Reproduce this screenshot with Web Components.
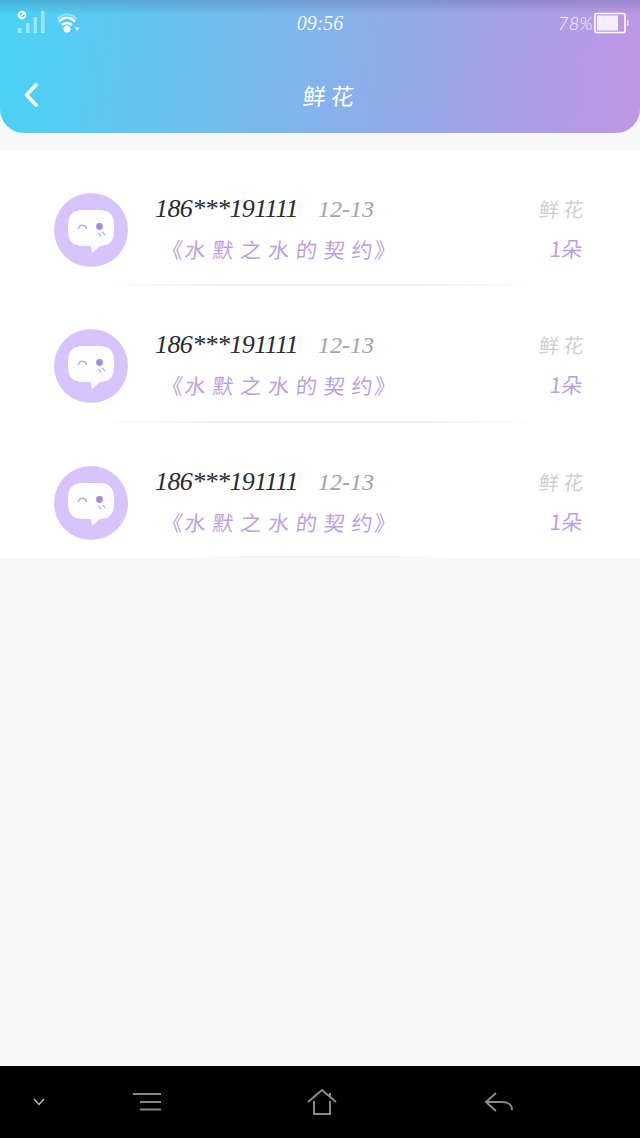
<!DOCTYPE html>
<html lang="zh"><head><meta charset="utf-8"><style>
html,body{margin:0;height:100%}
body{width:640px;height:1138px;background:#f8f8f8;display:flex;flex-direction:column;overflow:hidden;font-family:"Noto Sans CJK SC","Noto Sans",sans-serif}
main-list{margin-top:17px}
nav-bar{margin-top:auto}
</style></head><body>
<app-header title-text="鲜 花"></app-header>
<main-list>
<gift-row></gift-row><gift-row></gift-row><gift-row last></gift-row>
</main-list>
<nav-bar></nav-bar>
<script>
class AppHeader extends HTMLElement{constructor(){super();this.attachShadow({mode:'open'}).innerHTML=`<style>
:host{display:flex;flex-direction:column;height:133px;border-radius:0 0 24px 24px;overflow:hidden;color:#fff;background:linear-gradient(180deg,rgba(70,80,130,.28) 0,rgba(70,80,130,0) 14px),linear-gradient(97deg,#48d3f6 0%,#6cc0ef 30%,#8fade9 60%,#ab9ee7 82%,#c097e4 100%)}
.status{height:45px;display:grid;grid-template-columns:1fr auto 1fr;align-items:center;padding:0 11px 0 17px}
.left{display:flex;align-items:flex-start;gap:11px;align-self:start;margin-top:10px}
.time{font:italic 400 20px/24px "Liberation Serif",serif;opacity:.92;margin-right:6px}
.right{justify-self:end;display:flex;align-items:center;gap:1px}
.pct{font:300 italic 18px/24px Lato,sans-serif;letter-spacing:.4px;opacity:.95}
.bar{flex:1;display:grid;grid-template-columns:1fr auto 1fr;align-items:center;padding:12px 0 0 23px}
.t{font:400 23px/30px "Noto Sans CJK SC",sans-serif;white-space:pre;margin-right:6px;transform:skewX(-6deg)}
svg{display:block}
</style>
<div class="status">
<div class="left">
<svg width="29" height="24" viewBox="0 0 29 24"><g fill="#fff" fill-opacity=".45"><rect x="1" y="18" width="3.5" height="5"/><rect x="9" y="13" width="3.5" height="10"/><rect x="16.500" y="7" width="3.500" height="16"/><rect x="24" y="1" width="3.500" height="22"/></g><circle cx="5" cy="5" r="3.400" fill="none" stroke="#fff" stroke-width="1.800"/><path d="M2.800 7.200 7.200 2.800" stroke="#fff" stroke-width="1.600"/></svg>
<svg width="24" height="22" viewBox="0 0 24 22" style="margin-top:2px"><path d="M0.500 7C5 1 15 1 19.500 7" fill="none" stroke="#fff" stroke-opacity=".4" stroke-width="2"/><path d="M2 9.500C7 4.500 13 4.500 18 9.500" fill="none" stroke="#fff" stroke-width="2.500"/><path d="M5 13C8 10.500 12 10.500 15 13" fill="none" stroke="#fff" stroke-width="2.500"/><circle cx="10" cy="17" r="3.500" fill="#fff"/><path d="M17.500 15.500H22.500L20 18.500Z" fill="#fff"/></svg>
</div>
<div class="time">09:56</div>
<div class="right"><span class="pct">78%</span><svg width="35" height="22" viewBox="0 0 35 22"><rect x="1" y="1.500" width="30" height="19" rx="1.500" fill="none" stroke="#fff" stroke-width="1.600"/><rect x="3" y="3.500" width="21" height="15" fill="#f3eff9"/><rect x="33" y="8" width="1.500" height="6" fill="#fff" fill-opacity=".7"/></svg></div>
</div>
<div class="bar">
<svg width="18" height="24" viewBox="0 0 18 24"><path d="M13 2 3.500 12 13 22" fill="none" stroke="#fff" stroke-width="3.600" stroke-linecap="round" stroke-linejoin="round"/></svg>
<div class="t"></div><span></span></div>`;
this.shadowRoot.querySelector('.t').textContent=this.getAttribute('title-text')}}
customElements.define('app-header',AppHeader);

class MainList extends HTMLElement{constructor(){super();this.attachShadow({mode:'open'}).innerHTML=`<style>:host{display:block;background:#fff;height:408px}</style><slot></slot>`}}
customElements.define('main-list',MainList);

class ChatAvatar extends HTMLElement{constructor(){super();this.attachShadow({mode:'open'}).innerHTML=`<style>:host{display:block;width:74px;height:74px}svg{display:block}</style>
<svg width="74" height="74" viewBox="0 0 74 74"><circle cx="37" cy="37" r="37" fill="#d9c3fb"/>
<path d="M29 17H45C55 17 60 22 60 32V38C60 48 55 53 46 53L38 60 37 53H29C19 53 14 48 14 38V32C14 22 19 17 29 17Z" fill="#fff" fill-opacity=".97"/>
<path d="M24.500 35.500C25.500 31 31.500 31 32.500 35.500" fill="none" stroke="#bfaae2" stroke-width="1.500" stroke-linecap="round"/>
<circle cx="45.500" cy="33.500" r="3.400" fill="#a98ada"/>
<path d="M44.500 40 47 43M48.500 39 51 42" stroke="#b8a4de" stroke-width="1.100" stroke-linecap="round"/>
</svg>`}}
customElements.define('chat-avatar',ChatAvatar);

class GiftRow extends HTMLElement{constructor(){super();this.attachShadow({mode:'open'}).innerHTML=`<style>
:host{display:block;height:136.400px;box-sizing:border-box;position:relative;padding:43px 57px 0 54px}
:host([last]){height:135px}
.row{display:flex;gap:27px;align-items:flex-start}
.mid{flex:1;display:flex;flex-direction:column}
.top{display:flex;align-items:baseline;gap:20px;height:32px}
.phone{font:italic 400 26px/32px "Liberation Serif",serif;color:#2b2b2e;letter-spacing:-.6px}
.date{font:italic 400 24px/32px "Liberation Serif",serif;color:#a3a3a3}
.book{font:400 21px/30px "Noto Sans CJK SC",sans-serif;color:#bd9fe0;letter-spacing:6.800px;margin-top:9px;margin-left:7px;white-space:nowrap;transform:skewX(-6deg);transform-origin:left}
.open{letter-spacing:2px}
.tight{letter-spacing:1.800px}
.side{display:flex;flex-direction:column;align-items:flex-end}
.kind{font:400 20px/26px "Noto Sans CJK SC",sans-serif;color:#cfcfcf;white-space:pre;margin-top:3px;transform:skewX(-6deg)}
.num{font:400 21px/28px "Noto Sans CJK SC",sans-serif;color:#bd9fe0;margin-top:12px;transform:skewX(-6deg)}
.line{position:absolute;left:90px;right:90px;bottom:0;height:2px;background:linear-gradient(90deg,#fff0,#f0f0f0 30%,#f0f0f0 70%,#fff0)}
:host([last]) .line{left:190px;right:190px}
</style>
<div class="row"><chat-avatar></chat-avatar>
<div class="mid"><div class="top"><span class="phone">186***191111</span><span class="date">12-13</span></div>
<div class="book"><span class="open">《</span>水默之水的契<span class="tight">约</span>》</div></div>
<div class="side"><div class="kind">鲜 花</div><div class="num">1朵</div></div></div>
<div class="line"></div>`}}
customElements.define('gift-row',GiftRow);

class NavBar extends HTMLElement{constructor(){super();this.attachShadow({mode:'open'}).innerHTML=`<style>
:host{display:block;height:72px;background:#000}
.w{height:100%;display:grid;grid-template-columns:78px 137px 214px 139px;align-items:center}
svg{display:block;justify-self:center;fill:none;stroke:#8a8a8a;stroke-width:2}
</style><div class="w">
<svg width="14" height="10" viewBox="0 0 14 10" style="stroke:#bcbcbc;stroke-width:1.500"><path d="M2 2 7 7.500 12 2"/></svg>
<svg width="30" height="20" viewBox="0 0 30 20"><path d="M1 2H29M8 10H29M8 17.500H29"/></svg>
<svg width="30" height="26" viewBox="0 0 30 26"><path d="M1 13 15 1 29 13M23 4V8M7 12V25H23V12"/></svg>
<svg width="30" height="20" viewBox="0 0 30 20"><path d="M12 1 2 10 12 19M2 10H18C24 10 28 13 28 18"/></svg>
</div>`}}
customElements.define('nav-bar',NavBar);
</script>
</body></html>
